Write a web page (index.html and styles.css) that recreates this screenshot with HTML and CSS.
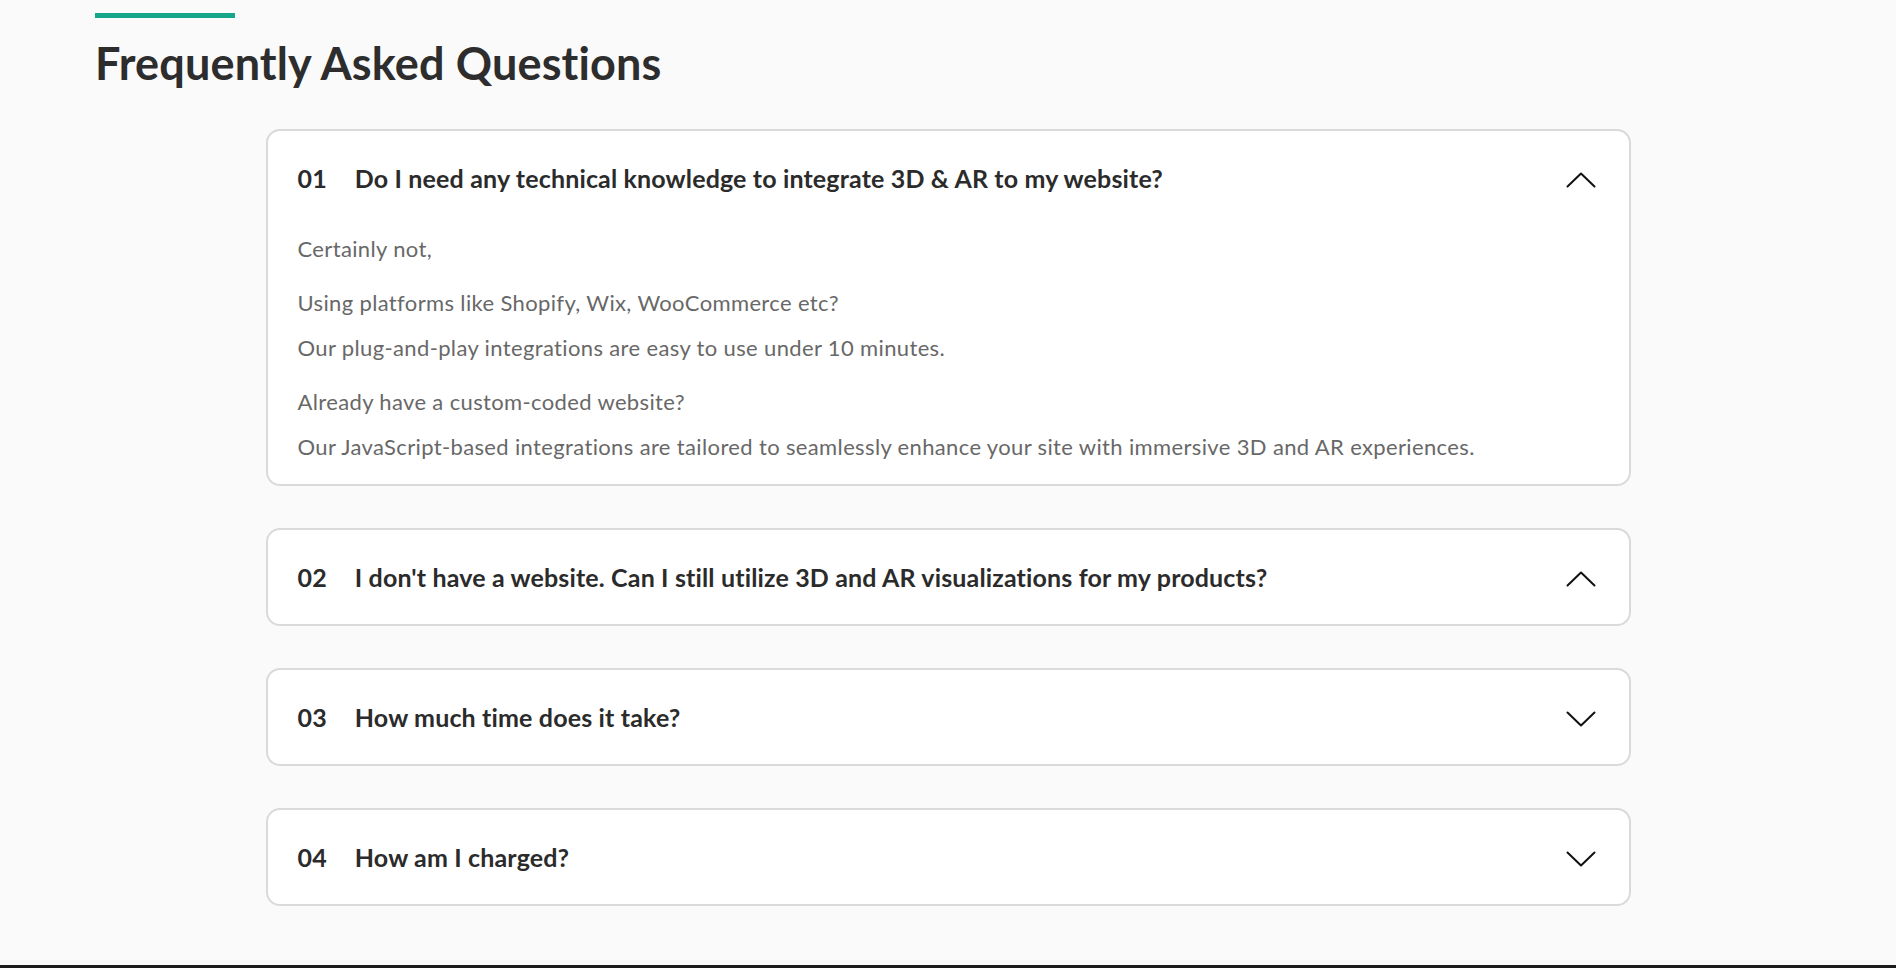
FILE: index.html
```html
<!DOCTYPE html>
<html lang="en">
<head>
<meta charset="utf-8">
<title>Frequently Asked Questions</title>
<link rel="stylesheet" href="styles.css">
</head>
<body>
<section class="faq">
  <div class="faq-head">
    <div class="accent"></div>
    <h2 class="title">Frequently Asked Questions</h2>
  </div>
  <div class="list">
    <div class="card open">
      <div class="q">
        <span class="num">01</span>
        <span class="qtext">Do I need any technical knowledge to integrate 3D &amp; AR to my website?</span>
        <svg class="chev" width="30" height="16" viewBox="0 0 30 16"><path d="M1.5 14.5 L15 1.5 L28.5 14.5" fill="none" stroke="#111" stroke-width="2" stroke-linecap="round" stroke-linejoin="round"/></svg>
      </div>
      <div class="answer">
        <p>Certainly not,</p>
        <p>Using platforms like Shopify, Wix, WooCommerce etc?<br>Our plug-and-play integrations are easy to use under 10 minutes.</p>
        <p>Already have a custom-coded website?<br>Our JavaScript-based integrations are tailored to seamlessly enhance your site with immersive 3D and AR experiences.</p>
      </div>
    </div>
    <div class="card">
      <div class="q">
        <span class="num">02</span>
        <span class="qtext">I don't have a website. Can I still utilize 3D and AR visualizations for my products?</span>
        <svg class="chev" width="30" height="16" viewBox="0 0 30 16"><path d="M1.5 14.5 L15 1.5 L28.5 14.5" fill="none" stroke="#111" stroke-width="2" stroke-linecap="round" stroke-linejoin="round"/></svg>
      </div>
    </div>
    <div class="card">
      <div class="q">
        <span class="num">03</span>
        <span class="qtext">How much time does it take?</span>
        <svg class="chev" width="30" height="16" viewBox="0 0 30 16"><path d="M1.5 1.5 L15 14.5 L28.5 1.5" fill="none" stroke="#111" stroke-width="2" stroke-linecap="round" stroke-linejoin="round"/></svg>
      </div>
    </div>
    <div class="card">
      <div class="q">
        <span class="num">04</span>
        <span class="qtext">How am I charged?</span>
        <svg class="chev" width="30" height="16" viewBox="0 0 30 16"><path d="M1.5 1.5 L15 14.5 L28.5 1.5" fill="none" stroke="#111" stroke-width="2" stroke-linecap="round" stroke-linejoin="round"/></svg>
      </div>
    </div>
  </div>
</section>
<footer class="footer"></footer>
</body>
</html>
```

FILE: styles.css
```css
* { box-sizing: border-box; }

body {
  margin: 0;
  background: #fafafa;
  font-family: "Lato", "Inter", sans-serif;
  color: #2d2d2d;
}

.faq {
  padding: 13px 0 59px;
}

.faq-head {
  padding-left: 95px;
}

.accent {
  width: 140px;
  height: 5px;
  background: #16a68a;
}

.title {
  margin: 18px 0 0;
  font-size: 45px;
  line-height: 54px;
  font-weight: 700;
  letter-spacing: 0.15px;
  color: #2d2d2d;
}

.list {
  width: 1365px;
  margin: 39px auto 0;
  display: flex;
  flex-direction: column;
  gap: 42px;
}

.card {
  background: #fff;
  border: 2px solid #dadada;
  border-radius: 14px;
}

.q {
  display: flex;
  align-items: center;
  height: 94px;
  padding: 0 33px 0 30px;
  font-size: 25px;
  font-weight: 700;
  letter-spacing: 0.15px;
  color: #2b2b2b;
}

.num {
  margin-right: 28px;
}

.qtext {
  flex: 1;
}

.chev {
  display: block;
  flex: none;
  margin-top: 4px;
}

.answer {
  padding: 1px 30px 15px;
  font-size: 22px;
  line-height: 45px;
  letter-spacing: 0.36px;
  color: #686868;
}

.answer p {
  margin: 0 0 9px;
}

.answer p:last-child {
  margin-bottom: 0;
}

.footer {
  height: 40px;
  background: #1b1b1b;
}
```
